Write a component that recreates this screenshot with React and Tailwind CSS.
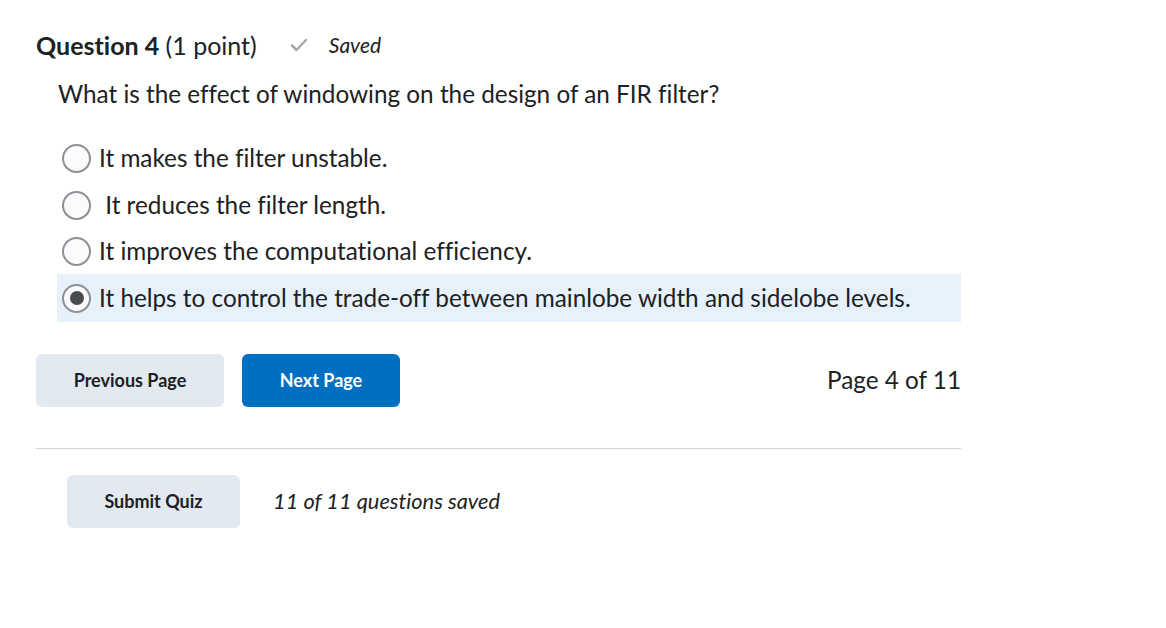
export default function App() {
  const options = [
    { text: "It makes the filter unstable.", h: "h-[47px]" },
    { text: "\u00a0It reduces the filter length.", h: "h-[47px]" },
    { text: "It improves the computational efficiency.", h: "h-[45px]" },
    { text: "It helps to control the trade-off between mainlobe width and sidelobe levels.", h: "h-[48px]", selected: true },
  ];
  return (
    <div className="w-[1166px] h-[628px] bg-white text-[#202122] [font-variant-ligatures:none]" style={{ fontFamily: "Lato, 'Noto Sans', sans-serif" }}>
      <div className="pl-[36px] pt-[29px] w-[961px]">
        <div className="flex items-center h-[32px]">
          <h2 className="text-[25px] leading-none whitespace-nowrap">
            <span className="font-bold">Question 4</span> <span>(1 point)</span>
          </h2>
          <svg className="ml-[33px] shrink-0" width="18" height="16" viewBox="0 0 18 16">
            <path d="M2 8.5 L6.5 13 L16 3" fill="none" stroke="#a4a9ad" strokeWidth="2.5" strokeLinecap="round" strokeLinejoin="round" />
          </svg>
          <span className="ml-[21px] italic text-[21px] text-[#202122]">Saved</span>
        </div>
        <p className="ml-[22px] mt-[17px] text-[24.3px] leading-[32px] whitespace-nowrap">What is the effect of windowing on the design of an FIR filter?</p>
        <div className="mt-[25px] ml-[21px] flex flex-col">
          {options.map((o, i) => (
            <div key={i} className={`flex items-center pl-[5px] ${o.h} ${o.selected ? "bg-[#e6f1fb]" : ""}`}>
              <span className="w-[29px] h-[29px] rounded-full border-2 border-[#8d9094] bg-[#fbfbfd] flex items-center justify-center shrink-0">
                {o.selected && <span className="w-[14px] h-[14px] rounded-full bg-[#494c4e]" />}
              </span>
              <span className="ml-[8px] text-[24.3px] leading-none whitespace-pre">{o.text}</span>
            </div>
          ))}
        </div>
        <div className="mt-[32px] flex items-center">
          <button className="w-[188px] h-[53px] rounded-[6px] bg-[#e3e9f1] text-[18px] font-bold text-[#202122]">Previous Page</button>
          <button className="ml-[18px] w-[158px] h-[53px] rounded-[6px] bg-[#006fbf] text-[18px] font-bold text-white">Next Page</button>
          <span className="ml-auto text-[24.3px]">Page 4 of 11</span>
        </div>
        <div className="mt-[41px] border-t border-[#cdd5dc]" />
        <div className="mt-[26px] ml-[31px] flex items-center">
          <button className="w-[173px] h-[53px] rounded-[6px] bg-[#e3e9f1] text-[18px] font-bold text-[#202122]">Submit Quiz</button>
          <span className="ml-[33px] italic text-[21.8px]">11 of 11 questions saved</span>
        </div>
      </div>
    </div>
  );
}
